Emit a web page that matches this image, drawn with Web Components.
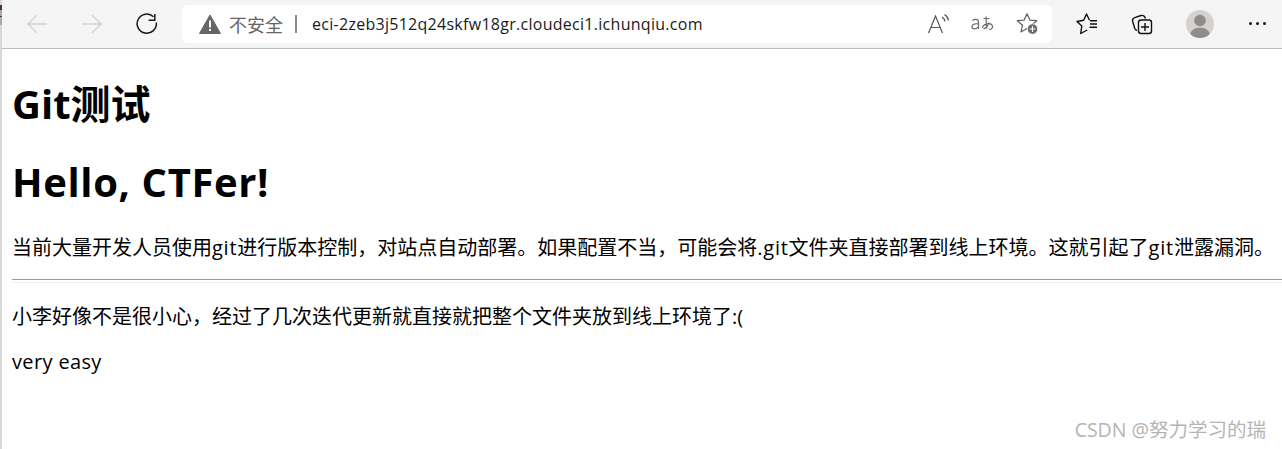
<!DOCTYPE html>
<html lang="zh">
<head>
<meta charset="utf-8">
<title>Git测试</title>
<style>
html, body { margin: 0; height: 100%; background: #fff; overflow: hidden; }
/* latin runs come out narrower than in the reference font */
.hello { letter-spacing: .62px; }
.lat { letter-spacing: .75px; }
.easy { letter-spacing: .36px; }
</style>
</head>
<body>
<browser-window>
    <browser-toolbar url="eci-2zeb3j512q24skfw18gr.cloudeci1.ichunqiu.com"></browser-toolbar>
    <page-content>
        <h1 slot="title">Git测试</h1>
        <h1 slot="title" class="hello">Hello, CTFer!</h1>
        <p slot="intro">当前大量开发人员使用<span class="lat">git</span>进行版本控制，对站点自动部署。如果配置不当，可能会将<span class="lat">.git</span>文件夹直接部署到线上环境。这就引起了<span class="lat">git</span>泄露漏洞。</p>
        <p>小李好像不是很小心，经过了几次迭代更新就直接就把整个文件夹放到线上环境了:(</p>
        <p class="easy">very easy</p>
    </page-content>
    <csdn-mark>CSDN @努力学习的瑞</csdn-mark>
</browser-window>

<script>
'use strict'

const FONT = `"Open Sans", "Noto Sans CJK SC", sans-serif`

class BrowserWindow extends HTMLElement {
    constructor() {
        super()
        this.attachShadow({mode: 'open'})
        this.shadowRoot.innerHTML = `
        <style>
            :host {
                display: flex;
                flex-direction: column;
                position: relative;
                height: 449px;
                box-sizing: border-box;
                border-left: 2px solid #d8d8d8;
                font-family: ${FONT};
                color: #000;
            }
            /* bit of another window showing at the left edge */
            .edge {
                position: absolute;
                left: -2px;
                top: 5px;
                width: 2px;
                height: 20px;
                background: linear-gradient(#5a3418 0 5px, #a8a8a8 5px 11px, #444 11px 12px, #aaa 12px);
            }
        </style>
        <div class="edge"></div>
        <slot></slot>`
    }
}

const ICONS = {
    back: `<svg width="24" height="24" viewBox="0 0 24 24" fill="none" stroke="#d2d2d2" stroke-width="1.4"><path d="M3.500 12H22M12 3l-9 9 9 9"/></svg>`,
    forward: `<svg width="24" height="24" viewBox="0 0 24 24" fill="none" stroke="#d2d2d2" stroke-width="1.4"><path d="M20.500 12H2M12 3l9 9-9 9"/></svg>`,
    reload: `<svg width="24" height="24" viewBox="0 0 24 24" fill="none" stroke="#1a1a1a" stroke-width="1.500"><path d="M18.500 4.800A9.600 9.600 0 1 0 21.300 10.500"/><path d="M19.800 2v6.200h-6.200"/></svg>`,
    warning: `<svg width="22" height="20" viewBox="0 0 22 20"><path d="M11 1L21.500 19.500H.5z" fill="#666" stroke="#666" stroke-width="1" stroke-linejoin="round"/><rect x="10" y="6.500" width="2" height="7" fill="#fff"/><rect x="10" y="15" width="2" height="2" fill="#fff"/></svg>`,
    read: `<svg width="24" height="24" viewBox="0 0 24 24" fill="none" stroke="#555" stroke-width="1.200"><path d="M1.500 21L8.500 4l7 17M3.800 15.500h9.400"/><path d="M15 5c1.600 1 2.700 2.500 3 4.500M17.500 2.500c2.300 1.500 3.700 3.500 4 6"/></svg>`,
    translate: `<svg width="24" height="20" viewBox="0 0 24 20" fill="none" stroke="#6b6b6b" stroke-width="1.200"><path d="M2.500 6.500c1.500-1.500 6-1.800 6 1.500v7M8.500 10c-3-.6-6.500 0-6.500 2.700s4.500 3 6.500 0"/><path d="M13.500 4.500h6M16.200 2.500c0 4-.3 9 .8 12M12.500 14c0-3.500 8-6.500 9.800-2.500 1 2.500-1 3.800-3.300 4M19 8.500c-1 3-3.500 6-5.500 6.300"/></svg>`,
    favAdd: `<svg width="24" height="24" viewBox="0 0 24 24"><path d="M11 1.800l2.800 6.300 6.900.6-5.200 4.500 1.500 6.700L11 16.500l-6 3.400 1.500-6.700L1.300 8.700l6.900-.6z" fill="none" stroke="#5f5f5f" stroke-width="1.200" stroke-linejoin="round"/><circle cx="16.500" cy="17" r="5.200" fill="#666" stroke="#fff" stroke-width=".8"/><path d="M16.500 14v6M13.500 17h6" stroke="#fff" stroke-width="1.200"/></svg>`,
    favorites: `<svg width="24" height="24" viewBox="0 0 24 24" fill="none" stroke="#111" stroke-width="1.400" stroke-linejoin="round"><path d="M14.500 8.200L11.500 2 8.700 8.300 2 9.500l4.800 4.600L5.700 21.500l6.500-3.500"/><path d="M15 8.700h7M15 12h7M14.500 15.300H22"/></svg>`,
    collections: `<svg width="24" height="24" viewBox="0 0 24 24" fill="none" stroke="#111" stroke-width="1.400"><path d="M7 18.500c-1.200-.3-1.800-1-2.200-2L2.700 9.500c-.5-2 .2-3.300 2-3.800L11 3.500c2-.5 3.800.2 4.500 3"/><rect x="8.500" y="8" width="13" height="13.500" rx="2.500"/><path d="M15 11v8M11 15h8"/></svg>`
}

class ToolButton extends HTMLElement {
    constructor() {
        super()
        this.attachShadow({mode: 'open'})
    }
    connectedCallback() {
        this.shadowRoot.innerHTML = `
        <style>
            :host {
                display: flex;
                align-items: center;
                justify-content: center;
                flex: none;
                width: var(--size, 24px);
                height: 24px;
            }
            svg { display: block; }
        </style>
        ${ICONS[this.getAttribute('icon')]}`
    }
}

class AddressBar extends HTMLElement {
    constructor() {
        super()
        this.attachShadow({mode: 'open'})
    }
    connectedCallback() {
        this.shadowRoot.innerHTML = `
        <style>
            :host {
                display: flex;
                align-items: center;
                flex: none;
                box-sizing: border-box;
                width: 870px;
                height: 38px;
                padding: 0 12px 0 16px;
                background: #fff;
                border-radius: 6px;
            }
            .warn { color: #666; margin-left: 7px; white-space: nowrap; font-size: 18px; }
            .sep { width: 2px; height: 18px; background: #888; margin: 0 15px 0 12px; flex: none; }
            .url { flex: 1; white-space: nowrap; color: #1a1a1a; font-size: 16px; letter-spacing: .28px; }
            .tools { display: flex; align-items: center; }
        </style>
        <tool-button icon="warning"></tool-button>
        <span class="warn">不安全</span>
        <span class="sep"></span>
        <span class="url">${this.getAttribute('url')}</span>
        <div class="tools">
            <tool-button icon="read"></tool-button>
            <tool-button icon="translate" style="margin-left:19px"></tool-button>
            <tool-button icon="favAdd" style="margin-left:22px"></tool-button>
        </div>`
    }
}

class UserAvatar extends HTMLElement {
    constructor() {
        super()
        this.attachShadow({mode: 'open'})
        this.shadowRoot.innerHTML = `
        <style>
            :host { display: block; flex: none; width: 28px; height: 28px; }
            svg { display: block; }
        </style>
        <svg width="28" height="28" viewBox="0 0 28 28">
            <defs><clipPath id="c"><circle cx="14" cy="14" r="14"/></clipPath></defs>
            <circle cx="14" cy="14" r="14" fill="#d5d3d0"/>
            <g clip-path="url(#c)" fill="#8f8b87">
                <circle cx="14" cy="10.500" r="5.800"/>
                <ellipse cx="14" cy="24" rx="9.500" ry="6.500"/>
            </g>
        </svg>`
    }
}

class BrowserToolbar extends HTMLElement {
    constructor() {
        super()
        this.attachShadow({mode: 'open'})
    }
    connectedCallback() {
        this.shadowRoot.innerHTML = `
        <style>
            :host {
                display: flex;
                align-items: center;
                flex: none;
                box-sizing: border-box;
                height: 49px;
                padding: 0 0 1px 23px;
                background: #f5f5f5;
                border-bottom: 1px solid #bdbdbd;
            }
            .nav { display: flex; gap: 31px; }
            .right { display: flex; align-items: center; }
            .dots { display: flex; gap: 4px; margin-left: 35px; }
            .dots i { width: 3px; height: 3px; border-radius: 50%; background: #1a1a1a; }
        </style>
        <div class="nav">
            <tool-button icon="back"></tool-button>
            <tool-button icon="forward"></tool-button>
            <tool-button icon="reload"></tool-button>
        </div>
        <address-bar url="${this.getAttribute('url')}" style="margin-left:23px"></address-bar>
        <div class="right">
            <tool-button icon="favorites" style="margin-left:23px"></tool-button>
            <tool-button icon="collections" style="margin-left:31px"></tool-button>
            <user-avatar style="margin-left:32px"></user-avatar>
            <div class="dots"><i></i><i></i><i></i></div>
        </div>`
    }
}

class PageContent extends HTMLElement {
    constructor() {
        super()
        this.attachShadow({mode: 'open'})
        this.shadowRoot.innerHTML = `
        <style>
            :host {
                display: block;
                padding: 0 0 0 10px;
                font-size: 20px;
            }
            ::slotted(h1) {
                margin: 0;
                font-size: 40px;
                line-height: 54px;
                font-weight: 700;
            }
            ::slotted(p) {
                margin: 0 0 18px;
                line-height: 27px;
                white-space: nowrap;
            }
            .titles { display: flex; flex-direction: column; gap: 24px; padding-top: 28px; }
            .intro { padding-top: 25px; }
            .rule {
                height: 2px;
                margin: 0 0 20px;
                border-top: 1px solid #9a9a9a;
                border-bottom: 1px solid #eee;
            }
        </style>
        <div class="titles"><slot name="title"></slot></div>
        <div class="intro"><slot name="intro"></slot></div>
        <div class="rule"></div>
        <slot></slot>`
    }
}

class CsdnMark extends HTMLElement {
    constructor() {
        super()
        this.attachShadow({mode: 'open'})
        this.shadowRoot.innerHTML = `
        <style>
            :host {
                position: absolute;
                right: 16px;
                bottom: 7px;
                font-size: 19.500px;
                line-height: 24px;
                color: #b4b4b4;
                white-space: nowrap;
            }
        </style>
        <slot></slot>`
    }
}

customElements.define('browser-window', BrowserWindow)
customElements.define('tool-button', ToolButton)
customElements.define('address-bar', AddressBar)
customElements.define('user-avatar', UserAvatar)
customElements.define('browser-toolbar', BrowserToolbar)
customElements.define('page-content', PageContent)
customElements.define('csdn-mark', CsdnMark)
</script>
</body>
</html>
